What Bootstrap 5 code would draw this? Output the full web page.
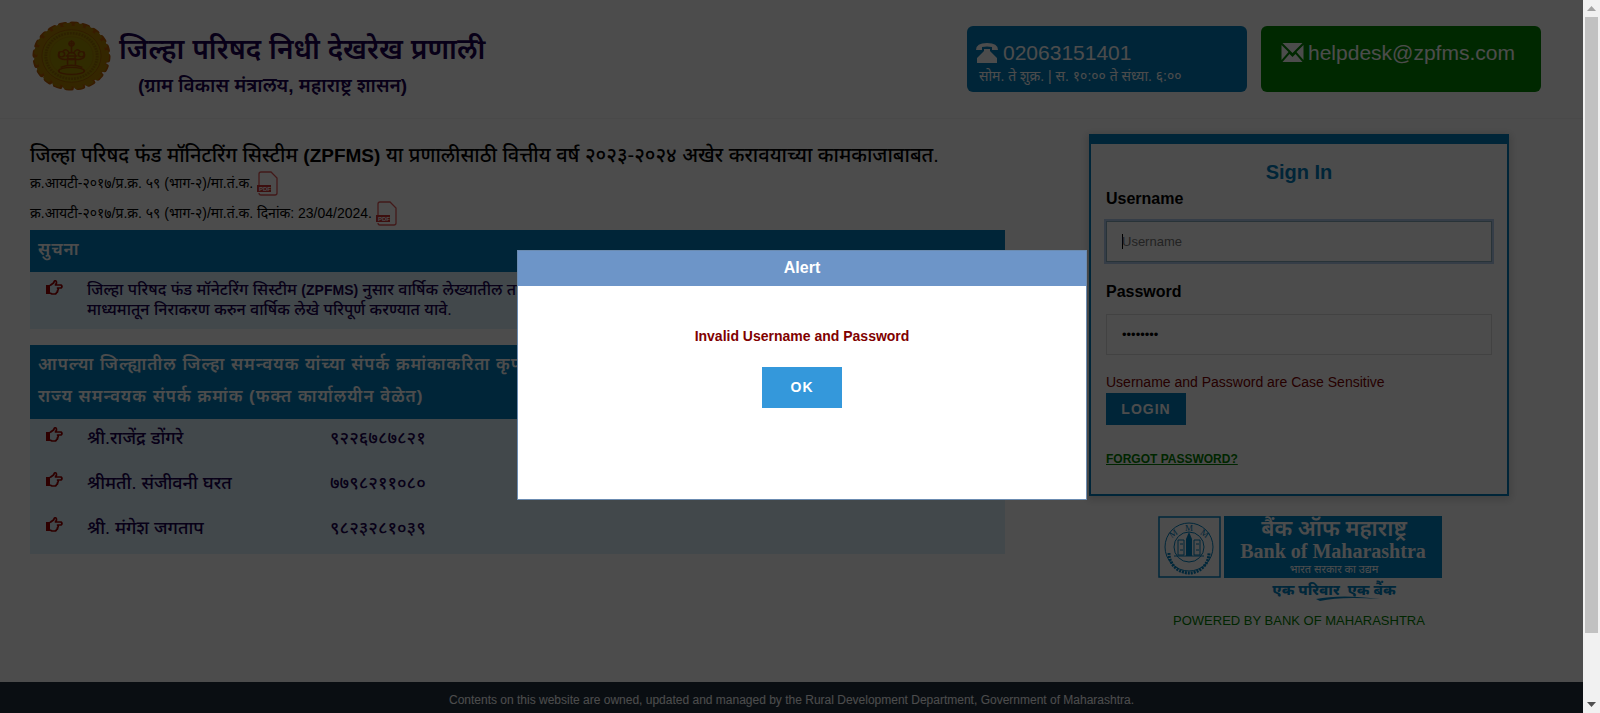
<!DOCTYPE html>
<html lang="mr">
<head>
<meta charset="utf-8">
<meta name="viewport" content="width=device-width, initial-scale=1">
<title>ZPFMS</title>
<link href="https://cdn.jsdelivr.net/npm/bootstrap@5.3.0/dist/css/bootstrap.min.css" rel="stylesheet">
<style>
body{font-family:"Liberation Sans","Noto Sans",sans-serif;font-size:14px;color:#000;background:#fff}
.site{min-height:100vh}
.blue-bg{background:#007cbb}
.green-bg{background:#008700}
.navy{color:#1b0050}
.site-head{min-height:119px;padding:21px 42px 0 32px;border-bottom:1px solid #f4f4f4}
.site-name{font-size:28px;font-weight:600;line-height:40px;margin:9px 0 0}
.ministry{font-size:19px;font-weight:600;line-height:28px;padding-left:19px;margin:2px 0 0}
.contacts{gap:14px}
.contact{width:280px;height:66px;border-radius:6px;color:#fff;margin-top:5px;padding-top:14px}
.contact a,.contact .big{color:#fff;font-size:21px;line-height:26px;text-decoration:none}
.site-main{padding:15px 74px 0 30px}
.left-col{flex:0 1 975px}
.right-col{flex:0 0 420px}
.lead-title{font-size:20px;font-weight:500;line-height:28px;margin:7px 0 0}
.lead-title b{font-size:19px}
.order{font-size:14px;line-height:26px;height:26px;margin-bottom:4px}
.band{color:#fff;font-size:17px;font-weight:600;letter-spacing:1px;line-height:32px;padding:4px 8px 6px}
.pale{background:#dcf0fa}
.note{padding:8px 0 9px 16px}
.note-text{font-size:16px;font-weight:500;line-height:20px}
.note-text b{font-size:14px}
.hand{width:17px;height:15px;color:#900}
.people td{padding:0;height:45px;font-size:18px;font-weight:500;vertical-align:top;line-height:38px}
.people td:first-child{width:57px;padding-left:16px;line-height:28px}
.people td:nth-child(2){width:243px}
.sign-card{border:2px solid #007cbb;border-top-width:10px;padding:16px 15px 25px;box-shadow:0 2px 8px 2px rgba(0,0,0,.15)}
.sign-title{color:#007cbb;font-size:20px;font-weight:700;line-height:24px;margin:0 0 3px}
.field-label{font-size:16px;font-weight:700;line-height:24px;margin-bottom:10px}
.user-box{margin-bottom:18px}
.sign-card .form-control{border-radius:0;font-size:13px;height:41px;padding:8px 15px;border-color:#ddd;color:#000;background-color:#fff}
.sign-card .user-box{border-color:#8ab;box-shadow:0 0 0 2px #b2cdee;background-image:linear-gradient(#000,#000);background-size:1px 15px;background-repeat:no-repeat;background-position:15px center}
.user-box::placeholder{color:#757575}
.case-note{color:#800000;font-size:14px;line-height:18px;margin:18px 0 2px}
.btn-login{border-radius:0;color:#fff;font-size:14px;font-weight:700;letter-spacing:1px;padding:0;width:80px;height:32px;margin-bottom:23px}
.forgot{color:green;font-size:12px;font-weight:700;line-height:18px}
.powered{color:green;font-size:13px;line-height:20px;margin-top:9px}
.site-foot{background:#22313f;color:#fff;font-size:12px;line-height:18px;padding:9px 0 4px}
.veil{position:absolute;inset:0;background:rgba(0,0,0,.7);padding:37px 0 0 21px}
.alert-box{width:570px;height:250px;border:1px solid #6b8bb0}
.alert-head{background:#6d95c8;color:#fff;font-size:16px;font-weight:700;line-height:33px;padding-bottom:2px;margin:0}
.alert-msg{color:#800000;font-weight:700;line-height:20px;margin:40px 0 21px}
.btn-ok{background:#3498db;color:#fff;border-radius:0;font-size:14px;font-weight:700;letter-spacing:1px;width:80px;height:41px;padding:0}
.scroll-rail{flex:0 0 17px;background:#f1f1f1}
.scroll-thumb{width:13px;height:616px;background:#c1c1c1}
</style>
</head>
<body>
<div class="d-flex site">
<div class="flex-grow-1 position-relative d-flex flex-column">
  <header class="site-head d-flex justify-content-between">
    <div class="d-flex">
      <svg width="79" height="70" viewBox="-40 -40 80 80" preserveAspectRatio="none" aria-hidden="true">
        <circle r="36" fill="#b08000" stroke="#b85a00" stroke-width="1"/>
        <circle r="37" fill="none" stroke="#b85a00" stroke-width="5" stroke-linecap="round" stroke-dasharray="5 6.625"/>
        <circle r="36" fill="none" stroke="#b08000" stroke-width="4" stroke-linecap="round" stroke-dasharray="5 6.625"/>
        <circle r="30" fill="#a98c00" stroke="#a06000"/>
        <circle r="26" fill="none" stroke="#987000" stroke-width="3" stroke-dasharray="2 1"/>
        <circle r="22" fill="#a09000" stroke="#a07800" stroke-width=".7"/>
        <g fill="none" stroke="#a04800" stroke-width="1.6"><ellipse cy="17" rx="13" ry="4"/><path d="M-11 13Q0 8 11 13M-4 10V3H4V10M-12-5Q-16 3-7 4H7Q16 3 12-5M-9-5Q-5-10-2-3M9-5Q5-10 2-3M-6 0H6M0-3V-18M-3-14H3"/><circle cy="-14" r="2.5"/><circle cx="-10" cy="-2" r="3"/><circle cx="10" cy="-2" r="3"/><circle r="4"/></g>
      </svg>
      <div class="navy ps-2">
        <h1 class="site-name">जिल्हा परिषद निधी देखरेख प्रणाली</h1>
        <p class="ministry">(ग्राम विकास मंत्रालय, महाराष्ट्र शासन)</p>
      </div>
    </div>
    <div class="d-flex contacts">
      <div class="contact blue-bg px-2">
        <div class="big d-flex align-items-center gap-1">
          <svg width="24" height="20" viewBox="0 0 24 20" fill="#fff" aria-hidden="true"><path d="M1 7Q1 0 12 0T23 7H17V4Q12 3 7 4V7ZM9 6H15V8L22 15V20H2V15L9 8Z"/></svg>
          <span>02063151401</span>
        </div>
        <div class="ps-1">सोम. ते शुक्र. | स. १०:०० ते संध्या. ६:००</div>
      </div>
      <div class="contact green-bg px-3">
        <a href="#" class="d-flex align-items-center gap-1 ps-1"><svg width="23" height="20" viewBox="0 0 22 20" fill="#fff" aria-hidden="true"><path d="M1 0H21L11 10ZM0 2 7 9 0 17ZM22 2 15 9 22 17ZM1 19 8 11 11 14 14 11 21 19Z"/></svg><span>helpdesk@zpfms.com</span></a>
      </div>
    </div>
  </header>

  <main class="site-main d-flex justify-content-between flex-grow-1">
    <div class="left-col">
      <h2 class="lead-title">जिल्हा परिषद फंड मॉनिटरिंग सिस्टीम <b>(ZPFMS)</b> या प्रणालीसाठी वित्तीय वर्ष २०२३-२०२४ अखेर करावयाच्या कामकाजाबाबत.</h2>
      <div class="order d-flex gap-1"><span>क्र.आयटी-२०१७/प्र.क्र. ५९ (भाग-२)/मा.तं.क.</span>
        <a href="#" aria-label="PDF"><svg class="d-block" width="21" height="26" viewBox="0 0 21 26"><path d="M2 16V4Q2 2 4 2H14L20 8V23Q20 25 18 25H4Q2 25 2 23" fill="#fff" stroke="#d55" stroke-width="1.3"/><path d="M0 15H14V22H0Z" fill="#c33"/><text x="2" y="21" font-size="6" font-weight="700" fill="#fff">PDF</text></svg></a></div>
      <div class="order d-flex gap-1"><span>क्र.आयटी-२०१७/प्र.क्र. ५९ (भाग-२)/मा.तं.क. दिनांक: 23/04/2024.</span>
        <a href="#" aria-label="PDF"><svg class="d-block" width="21" height="26" viewBox="0 0 21 26"><path d="M2 16V4Q2 2 4 2H14L20 8V23Q20 25 18 25H4Q2 25 2 23" fill="#fff" stroke="#d55" stroke-width="1.3"/><path d="M0 15H14V22H0Z" fill="#c33"/><text x="2" y="21" font-size="6" font-weight="700" fill="#fff">PDF</text></svg></a></div>

      <section class="mb-3">
        <h3 class="band blue-bg m-0">सुचना</h3>
        <div class="pale note d-flex">
          <svg class="hand flex-shrink-0 me-4" viewBox="0 0 17 15" aria-hidden="true"><path d="M0 5H4V14H0Z" fill="currentColor"/><path d="M4 5.500 7.500 3 8.500 1Q10.500 0 10.500 3L9.500 5H15Q17 6.500 15 8H11.500Q13 9.500 11.500 10.500 12 12 10.500 12.500 10.500 14 8.500 14H6L4 13" fill="none" stroke="currentColor" stroke-width="1.700" stroke-linejoin="round"/></svg>
          <p class="note-text navy m-0">जिल्हा परिषद फंड मॉनेटरिंग सिस्टीम <b>(ZPFMS)</b> नुसार वार्षिक लेख्यातील तपशीलाचे<br>माध्यमातून निराकरण करुन वार्षिक लेखे परिपूर्ण करण्यात यावे.</p>
        </div>
      </section>

      <section>
        <h3 class="band blue-bg m-0">आपल्या जिल्ह्यातील जिल्हा समन्वयक यांच्या संपर्क क्रमांकाकरिता कृपया<br>राज्य समन्वयक संपर्क क्रमांक (फक्त कार्यालयीन वेळेत)</h3>
        <table class="people pale navy w-100">
          <tr><td><svg class="hand" viewBox="0 0 17 15" aria-hidden="true"><path d="M0 5H4V14H0Z" fill="currentColor"/><path d="M4 5.500 7.500 3 8.500 1Q10.500 0 10.500 3L9.500 5H15Q17 6.500 15 8H11.500Q13 9.500 11.500 10.500 12 12 10.500 12.500 10.500 14 8.500 14H6L4 13" fill="none" stroke="currentColor" stroke-width="1.700" stroke-linejoin="round"/></svg></td><td>श्री.राजेंद्र डोंगरे</td><td>९२२६७८७८२१</td></tr>
          <tr><td><svg class="hand" viewBox="0 0 17 15" aria-hidden="true"><path d="M0 5H4V14H0Z" fill="currentColor"/><path d="M4 5.500 7.500 3 8.500 1Q10.500 0 10.500 3L9.500 5H15Q17 6.500 15 8H11.500Q13 9.500 11.500 10.500 12 12 10.500 12.500 10.500 14 8.500 14H6L4 13" fill="none" stroke="currentColor" stroke-width="1.700" stroke-linejoin="round"/></svg></td><td>श्रीमती. संजीवनी घरत</td><td>७७९८२११०८०</td></tr>
          <tr><td><svg class="hand" viewBox="0 0 17 15" aria-hidden="true"><path d="M0 5H4V14H0Z" fill="currentColor"/><path d="M4 5.500 7.500 3 8.500 1Q10.500 0 10.500 3L9.500 5H15Q17 6.500 15 8H11.500Q13 9.500 11.500 10.500 12 12 10.500 12.500 10.500 14 8.500 14H6L4 13" fill="none" stroke="currentColor" stroke-width="1.700" stroke-linejoin="round"/></svg></td><td>श्री. मंगेश जगताप</td><td>९८२३२८१०३९</td></tr>
        </table>
      </section>
    </div>

    <div class="right-col">
      <form class="sign-card bg-white">
        <h2 class="sign-title text-center">Sign In</h2>
        <label class="field-label d-block" for="user">Username</label>
        <input class="form-control user-box" id="user" type="text" placeholder="Username">
        <label class="field-label d-block" for="pass">Password</label>
        <input class="form-control" id="pass" type="password" value="password">
        <p class="case-note">Username and Password are Case Sensitive</p>
        <button class="btn btn-login blue-bg d-block" type="button">LOGIN</button>
        <a href="#" class="forgot">FORGOT PASSWORD?</a>
      </form>
      <div class="text-center mt-3">
        <svg class="d-block mx-auto" width="286" height="90" viewBox="0 -4 286 90" role="img" aria-label="Bank of Maharashtra">
          <rect x="3" y="1" width="61" height="60" fill="#fff" stroke="#0082c3" stroke-width="1.500"/>
          <g fill="none" stroke="#0082c3"><circle cx="33" cy="31" r="24"/><circle cx="33" cy="31" r="15"/><path d="M22 24H28V39H22ZM38 24H44V39H38ZM24 28H27M24 34H27M40 28H43M40 34H43M18 40H48"/><path d="M13 37A20 20 0 0 0 53 37" stroke-width="3" stroke-dasharray="2 1"/></g>
          <path d="M33 16 36 23V40H30V23Z" fill="#0082c3"/>
          <g fill="#0082c3" font-family="Liberation Serif" font-size="9" text-anchor="middle"><text x="33" y="15">M</text><text x="19" y="20" transform="rotate(-35 19 20)">M</text><text x="47" y="20" transform="rotate(35 47 20)">M</text></g>
          <rect x="68" width="218" height="62" fill="#0082c3"/>
          <g fill="#fff" text-anchor="middle"><text x="178" y="20" font-family="Noto Sans" font-size="22" font-weight="600">बैंक ऑफ महाराष्ट्र</text><text x="177" y="42" font-family="Liberation Serif" font-size="20" font-weight="700">Bank of Maharashtra</text><text x="178" y="57" font-family="Noto Sans" font-size="11">भारत सरकार का उद्यम</text></g>
          <text x="178" y="79" text-anchor="middle" font-family="Noto Sans" font-size="15" font-weight="800" font-style="italic" fill="#0082c3">एक परिवार&#160; एक बैंक</text>
          <path d="M160 83Q185 78 224 83 185 80 164 85Z" fill="#0082c3"/>
        </svg>
        <p class="powered mb-0">POWERED BY BANK OF MAHARASHTRA</p>
      </div>
    </div>
  </main>

  <footer class="site-foot text-center">Contents on this website are owned, updated and managed by the Rural Development Department, Government of Maharashtra.</footer>

  <div class="veil d-flex align-items-center justify-content-center">
    <div class="alert-box bg-white text-center" role="alertdialog" aria-label="Alert">
      <h2 class="alert-head">Alert</h2>
      <p class="alert-msg">Invalid Username and Password</p>
      <button class="btn btn-ok" type="button">OK</button>
    </div>
  </div>
</div>
<div class="scroll-rail d-flex flex-column align-items-center" aria-hidden="true">
  <svg width="17" height="17"><path d="M4 11 8.500 6 13 11Z" fill="#a3a3a3"/></svg>
  <div class="scroll-thumb"></div>
  <svg class="mt-auto" width="17" height="17"><path d="M4 6 8.500 11 13 6Z" fill="#505050"/></svg>
</div>
</div>
<script src="https://cdn.jsdelivr.net/npm/bootstrap@5.3.0/dist/js/bootstrap.bundle.min.js"></script>
</body>
</html>
